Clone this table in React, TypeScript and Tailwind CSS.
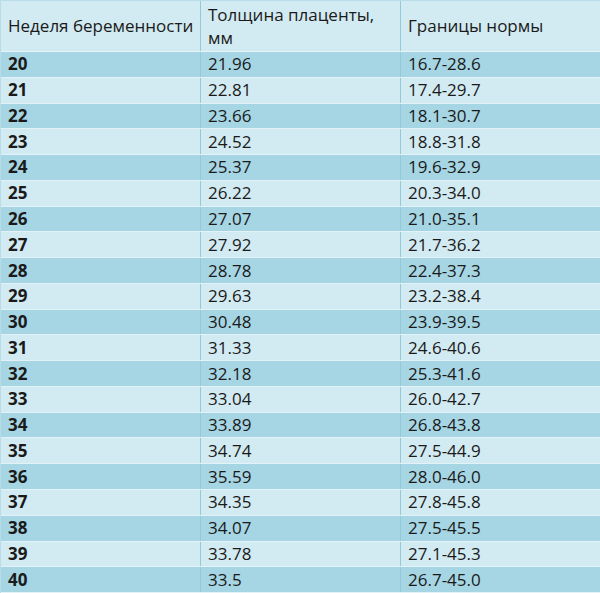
import React from 'react';

const rows: [string, string, string][] = [
  ['20', '21.96', '16.7-28.6'],
  ['21', '22.81', '17.4-29.7'],
  ['22', '23.66', '18.1-30.7'],
  ['23', '24.52', '18.8-31.8'],
  ['24', '25.37', '19.6-32.9'],
  ['25', '26.22', '20.3-34.0'],
  ['26', '27.07', '21.0-35.1'],
  ['27', '27.92', '21.7-36.2'],
  ['28', '28.78', '22.4-37.3'],
  ['29', '29.63', '23.2-38.4'],
  ['30', '30.48', '23.9-39.5'],
  ['31', '31.33', '24.6-40.6'],
  ['32', '32.18', '25.3-41.6'],
  ['33', '33.04', '26.0-42.7'],
  ['34', '33.89', '26.8-43.8'],
  ['35', '34.74', '27.5-44.9'],
  ['36', '35.59', '28.0-46.0'],
  ['37', '34.35', '27.8-45.8'],
  ['38', '34.07', '27.5-45.5'],
  ['39', '33.78', '27.1-45.3'],
  ['40', '33.5', '26.7-45.0'],
];

export default function App() {
  return (
    <div
      className="w-[600px] h-[593px] flex flex-col bg-[#d2eaf1] text-[#1a1a1a] text-[17px] leading-[20px] border-l border-t border-[#b9dde8]"
      style={{ fontFamily: '"Open Sans", "Noto Sans", sans-serif' }}
    >
      {/* header */}
      <div className="h-[51px] shrink-0 grid grid-cols-[200px_200px_1fr] bg-[#d2eaf1] border-b border-[#e6f3f7]">
        <div className="flex items-center px-[7px] border-r border-[#93c9d9] whitespace-nowrap">Неделя беременности</div>
        <div className="flex flex-col justify-center px-[7px] leading-[23px] border-r border-[#93c9d9]">
          <span>Толщина плаценты,</span>
          <span>мм</span>
        </div>
        <div className="flex items-center px-[7px]">Границы нормы</div>
      </div>

      {rows.map(([week, mm, range], i) => (
        <div
          key={week}
          className={
            'flex-1 basis-0 min-h-0 grid grid-cols-[200px_200px_1fr] border-b border-[#e3f2f6] ' +
            (i % 2 === 0 ? 'bg-[#a6d5e3]' : 'bg-[#d2eaf1]')
          }
        >
          <div className="flex items-center px-[7px] font-bold border-r border-[#93c9d9]">{week}</div>
          <div className="flex items-center px-[7px] border-r border-[#93c9d9]">{mm}</div>
          <div className="flex items-center px-[7px]">{range}</div>
        </div>
      ))}
    </div>
  );
}
